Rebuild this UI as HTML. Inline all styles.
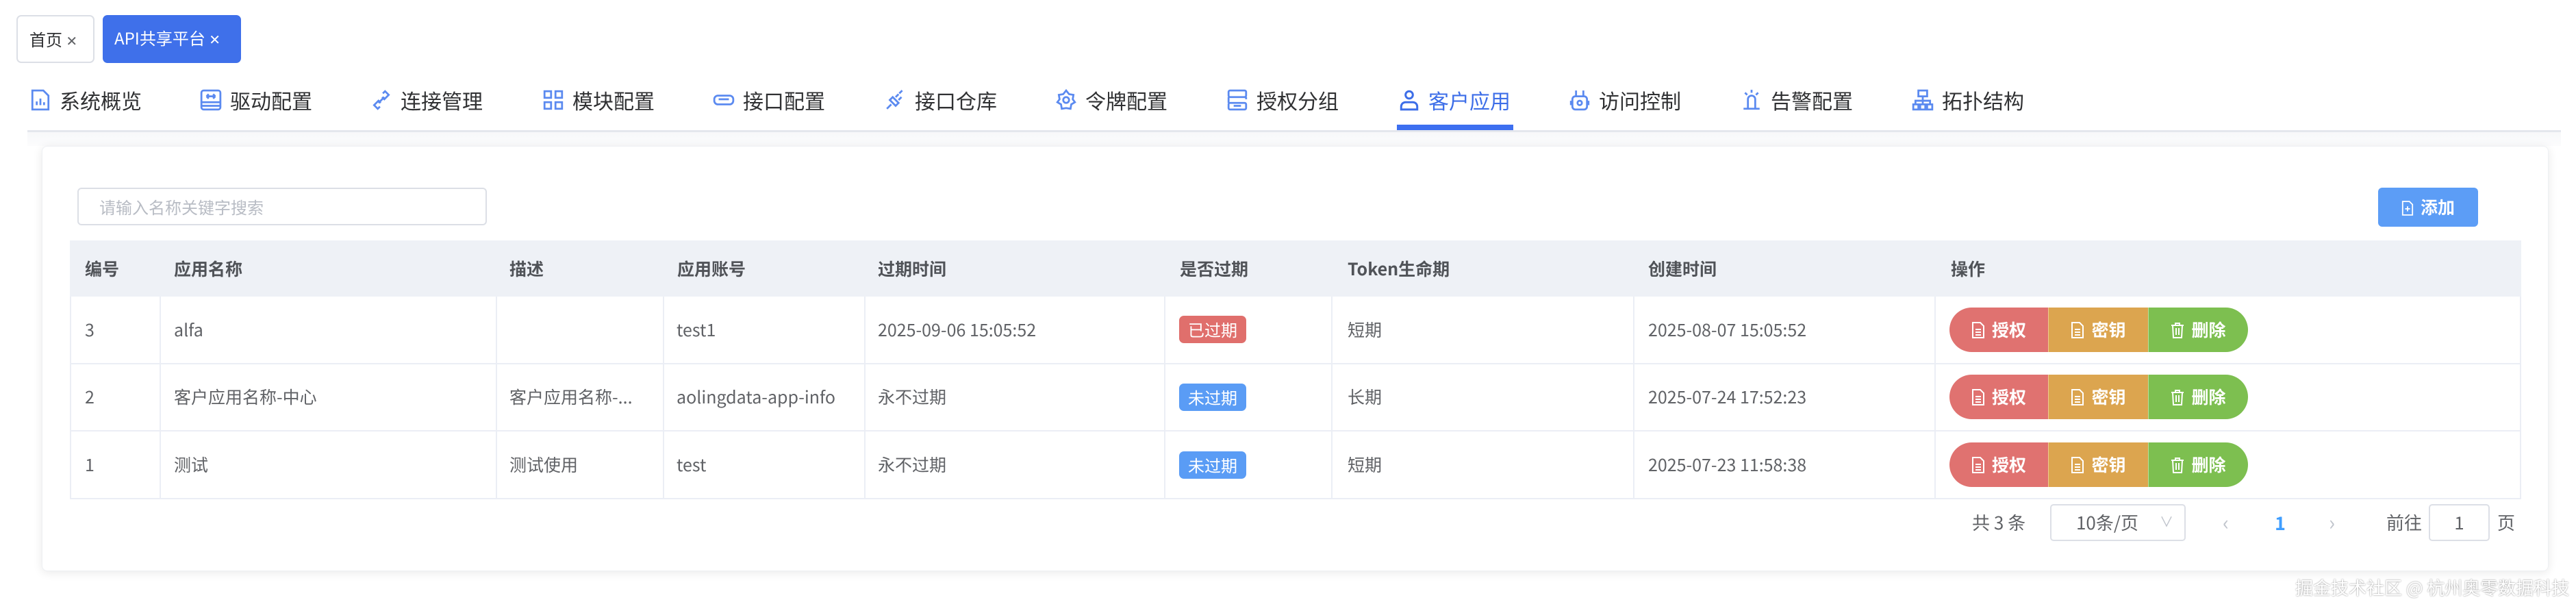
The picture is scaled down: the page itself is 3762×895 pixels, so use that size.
<!DOCTYPE html>
<html><head><meta charset="utf-8"><style>
*{margin:0;padding:0;box-sizing:border-box}
body{width:3762px;height:895px;background:#fff;font-family:"Noto Sans CJK SC","Liberation Sans",sans-serif;color:#606266;position:relative;overflow:hidden}
.a{position:absolute}
.tab{position:absolute;top:22px;height:70px;border-radius:7px;font-size:24px;line-height:66px;padding-left:17px;white-space:nowrap}
.nav{position:absolute;top:126px;height:40px;font-size:30px;line-height:40px;color:#303133;white-space:nowrap}
.nav svg{position:absolute;left:0;top:4px;width:32px;height:32px}
.nav span{position:absolute;left:44px;top:0}
.card{left:61px;top:213px;width:3661px;height:621px;border-radius:8px;background:#fff;box-shadow:0 2px 14px rgba(0,0,0,.09);border:1px solid #eef0f3}
.th{position:absolute;top:351px;height:82px;line-height:82px;font-size:25px;font-weight:bold;color:#505358}
.td{position:absolute;font-size:25px;line-height:40px;color:#606266;white-space:nowrap}
.vl{position:absolute;width:2px;background:#ebeef5}
.hl{position:absolute;left:102px;width:3580px;height:2px;background:#ebeef5}
.tag{position:absolute;left:1722px;width:98px;height:40px;border-radius:7px;color:#fff;font-size:24px;line-height:40px;text-align:center}
.btns{position:absolute;left:2847px;width:436px;height:65px;border-radius:33px;overflow:hidden;display:flex}
.btns div{height:65px;line-height:65px;color:#fff;font-size:25px;font-weight:bold;text-align:center}
.btns svg{width:20px;height:24px;vertical-align:-3px;margin-right:10px}
</style></head><body>

<div class="tab" style="left:24px;width:114px;border:2px solid #dcdfe6;color:#303133">首页 <span style="font-size:20px;color:#606266">✕</span></div>
<div class="tab" style="left:150px;width:202px;background:#3f70ea;color:#fff">API共享平台 <span style="font-size:20px">✕</span></div>

<div class="nav" style="left:43px"><svg viewBox="0 0 30 30" fill="none" stroke="#5b8af0" stroke-width="2.6"><path d="M4 2h15l7 7v19H4z"/><path d="M10 22v-5M15 22v-9M20 22v-4"/></svg><span>系统概览</span></div>
<div class="nav" style="left:292px"><svg viewBox="0 0 30 30" fill="none" stroke="#5b8af0" stroke-width="2.6"><rect x="2" y="2" width="26" height="26" rx="3"/><path d="M2 18h26M2 23h26M11 10h8M9 10l3-3M9 10l3 3M21 10l-3-3M21 10l-3 3"/></svg><span>驱动配置</span></div>
<div class="nav" style="left:541px"><svg viewBox="0 0 30 30" fill="none" stroke="#5b8af0" stroke-width="2.6"><path d="M17 6l3-3 5 5-6 6-3-3M13 24l-3 3-5-5 6-6 3 3M11 19l8-8"/></svg><span>连接管理</span></div>
<div class="nav" style="left:792px"><svg viewBox="0 0 30 30" fill="none" stroke="#5b8af0" stroke-width="2.6"><rect x="3" y="3" width="9" height="9"/><rect x="18" y="3" width="9" height="9"/><rect x="3" y="18" width="9" height="9"/><rect x="18" y="18" width="9" height="9"/></svg><span>模块配置</span></div>
<div class="nav" style="left:1041px"><svg viewBox="0 0 30 30" fill="none" stroke="#5b8af0" stroke-width="2.6"><rect x="2" y="9" width="26" height="12" rx="5"/><path d="M8 14h14"/></svg><span>接口配置</span></div>
<div class="nav" style="left:1292px"><svg viewBox="0 0 30 30" fill="none" stroke="#5b8af0" stroke-width="2.6"><path d="M3 27l6-6M11 11l8 8-4 4-8-8zM15 11l4-4M19 15l4-4M20 6l4-4"/></svg><span>接口仓库</span></div>
<div class="nav" style="left:1541px"><svg viewBox="0 0 30 30" fill="none" stroke="#5b8af0" stroke-width="2.6"><path d="M15 2l4 5 6 1-1 6 3 4-5 3-1 6-6-1-6 1-1-6-5-3 3-4-1-6 6-1z"/><circle cx="15" cy="15" r="4"/></svg><span>令牌配置</span></div>
<div class="nav" style="left:1791px"><svg viewBox="0 0 30 30" fill="none" stroke="#5b8af0" stroke-width="2.6"><rect x="3" y="2" width="24" height="9" rx="2"/><rect x="3" y="19" width="24" height="9" rx="2"/><path d="M3 11v8M27 11v3M10 23h10"/></svg><span>授权分组</span></div>
<div class="nav" style="left:2042px;color:#3d6ee8"><svg viewBox="0 0 30 30" fill="none" stroke="#3d6ee8" stroke-width="2.8"><circle cx="15" cy="8" r="5"/><path d="M4 28v-4a6 6 0 0 1 6-6h10a6 6 0 0 1 6 6v4z"/></svg><span>客户应用</span></div>
<div class="nav" style="left:2291px"><svg viewBox="0 0 30 30" fill="none" stroke="#5b8af0" stroke-width="2.6"><rect x="5" y="10" width="20" height="18" rx="4"/><circle cx="15" cy="19" r="3"/><path d="M10 10V2M20 10V2M3 16v6M27 16v6"/></svg><span>访问控制</span></div>
<div class="nav" style="left:2542px"><svg viewBox="0 0 30 30" fill="none" stroke="#5b8af0" stroke-width="2.6"><path d="M10 26V14a5 5 0 0 1 10 0v12M4 27h22M15 1v4M6 5l3 3M24 5l-3 3"/></svg><span>告警配置</span></div>
<div class="nav" style="left:2792px"><svg viewBox="0 0 30 30" fill="none" stroke="#5b8af0" stroke-width="2.6"><rect x="9" y="2" width="12" height="8"/><path d="M15 10v6M5 21v-5h20v5M15 16v5"/><rect x="2" y="21" width="7" height="7"/><rect x="11.5" y="21" width="7" height="7"/><rect x="21" y="21" width="7" height="7"/></svg><span>拓扑结构</span></div>
<div class="a" style="left:2040px;top:182px;width:170px;height:8px;background:#3d6ff0"></div>
<div class="a" style="left:40px;top:190px;width:3700px;height:3px;background:#e4e7ed"></div>
<div class="a" style="left:40px;top:193px;width:3700px;height:20px;background:linear-gradient(#f7f8fa,#fcfcfd)"></div>

<div class="a card"></div>

<div class="a" style="left:113px;top:274px;width:598px;height:55px;border:2px solid #dcdfe6;border-radius:6px;font-size:24px;line-height:51px;padding-left:30px;color:#b8bcc4">请输入名称关键字搜索</div>
<div class="a" style="left:3473px;top:274px;width:146px;height:57px;border-radius:6px;background:#5c9df6;color:#fff;font-size:25px;line-height:57px;text-align:center;font-weight:bold"><svg viewBox="0 0 20 24" width="18" height="22" fill="none" stroke="#fff" stroke-width="2" style="vertical-align:-3px;margin-right:10px"><path d="M2 1h11l5 5v17H2z"/><path d="M10 9v8M6 13h8"/></svg>添加</div>

<div class="a" style="left:102px;top:351px;width:3580px;height:82px;background:#eef1f6"></div>
<div class="th" style="left:124px">编号</div>
<div class="th" style="left:254px">应用名称</div>
<div class="th" style="left:744px">描述</div>
<div class="th" style="left:989px">应用账号</div>
<div class="th" style="left:1282px">过期时间</div>
<div class="th" style="left:1723px">是否过期</div>
<div class="th" style="left:1968px">Token生命期</div>
<div class="th" style="left:2407px">创建时间</div>
<div class="th" style="left:2849px">操作</div>

<div class="hl" style="top:530px"></div>
<div class="hl" style="top:628px"></div>
<div class="hl" style="top:727px"></div>
<div class="vl" style="left:102px;top:433px;height:296px"></div>
<div class="vl" style="left:233px;top:433px;height:296px"></div>
<div class="vl" style="left:724px;top:433px;height:296px"></div>
<div class="vl" style="left:968px;top:433px;height:296px"></div>
<div class="vl" style="left:1262px;top:433px;height:296px"></div>
<div class="vl" style="left:1700px;top:433px;height:296px"></div>
<div class="vl" style="left:1944px;top:433px;height:296px"></div>
<div class="vl" style="left:2385px;top:433px;height:296px"></div>
<div class="vl" style="left:2825px;top:433px;height:296px"></div>
<div class="vl" style="left:3680px;top:433px;height:296px"></div>

<div class="td" style="left:124px;top:461px">3</div>
<div class="td" style="left:254px;top:461px">alfa</div>
<div class="td" style="left:988px;top:461px">test1</div>
<div class="td" style="left:1282px;top:461px">2025-09-06 15:05:52</div>
<div class="tag" style="top:461px;background:#e06f6c">已过期</div>
<div class="td" style="left:1968px;top:461px">短期</div>
<div class="td" style="left:2407px;top:461px">2025-08-07 15:05:52</div>

<div class="td" style="left:124px;top:559px">2</div>
<div class="td" style="left:254px;top:559px">客户应用名称-中心</div>
<div class="td" style="left:744px;top:559px">客户应用名称-...</div>
<div class="td" style="left:988px;top:559px">aolingdata-app-info</div>
<div class="td" style="left:1282px;top:559px">永不过期</div>
<div class="tag" style="top:560px;background:#5a9cf5">未过期</div>
<div class="td" style="left:1968px;top:559px">长期</div>
<div class="td" style="left:2407px;top:559px">2025-07-24 17:52:23</div>

<div class="td" style="left:124px;top:658px">1</div>
<div class="td" style="left:254px;top:658px">测试</div>
<div class="td" style="left:744px;top:658px">测试使用</div>
<div class="td" style="left:988px;top:658px">test</div>
<div class="td" style="left:1282px;top:658px">永不过期</div>
<div class="tag" style="top:659px;background:#5a9cf5">未过期</div>
<div class="td" style="left:1968px;top:658px">短期</div>
<div class="td" style="left:2407px;top:658px">2025-07-23 11:58:38</div>

<div class="btns" style="top:449px"><div style="width:144px;background:#e07270"><svg viewBox="0 0 20 24" fill="none" stroke="#fff" stroke-width="2"><path d="M2 1h11l5 5v17H2zM6 11h8M6 15h8M6 19h8"/></svg>授权</div><div style="width:146px;background:#dca54f;border-left:1px solid #f0c890"><svg viewBox="0 0 20 24" fill="none" stroke="#fff" stroke-width="2"><path d="M2 1h11l5 5v17H2zM6 11h8M6 15h8M6 19h8"/></svg>密钥</div><div style="width:146px;background:#7dbf50;border-left:1px solid #b6e09a"><svg viewBox="0 0 20 24" fill="none" stroke="#fff" stroke-width="2"><path d="M1 5h18M7 5V2h6v3M3 5l1 18h12l1-18M8 9v10M12 9v10"/></svg>删除</div></div>
<div class="btns" style="top:547px"><div style="width:144px;background:#e07270"><svg viewBox="0 0 20 24" fill="none" stroke="#fff" stroke-width="2"><path d="M2 1h11l5 5v17H2zM6 11h8M6 15h8M6 19h8"/></svg>授权</div><div style="width:146px;background:#dca54f;border-left:1px solid #f0c890"><svg viewBox="0 0 20 24" fill="none" stroke="#fff" stroke-width="2"><path d="M2 1h11l5 5v17H2zM6 11h8M6 15h8M6 19h8"/></svg>密钥</div><div style="width:146px;background:#7dbf50;border-left:1px solid #b6e09a"><svg viewBox="0 0 20 24" fill="none" stroke="#fff" stroke-width="2"><path d="M1 5h18M7 5V2h6v3M3 5l1 18h12l1-18M8 9v10M12 9v10"/></svg>删除</div></div>
<div class="btns" style="top:646px"><div style="width:144px;background:#e07270"><svg viewBox="0 0 20 24" fill="none" stroke="#fff" stroke-width="2"><path d="M2 1h11l5 5v17H2zM6 11h8M6 15h8M6 19h8"/></svg>授权</div><div style="width:146px;background:#dca54f;border-left:1px solid #f0c890"><svg viewBox="0 0 20 24" fill="none" stroke="#fff" stroke-width="2"><path d="M2 1h11l5 5v17H2zM6 11h8M6 15h8M6 19h8"/></svg>密钥</div><div style="width:146px;background:#7dbf50;border-left:1px solid #b6e09a"><svg viewBox="0 0 20 24" fill="none" stroke="#fff" stroke-width="2"><path d="M1 5h18M7 5V2h6v3M3 5l1 18h12l1-18M8 9v10M12 9v10"/></svg>删除</div></div>

<div class="td" style="left:2880px;top:743px;font-size:26px">共 3 条</div>
<div class="a" style="left:2994px;top:736px;width:198px;height:54px;border:2px solid #dcdfe6;border-radius:5px;font-size:26px;line-height:50px;padding-left:36px;color:#606266">10条/页<span style="position:absolute;right:16px;top:-2px;color:#c0c4cc;font-size:20px">∨</span></div>
<div class="td" style="left:3246px;top:741px;font-size:30px;color:#c0c4cc">‹</div>
<div class="td" style="left:3322px;top:743px;font-size:27px;color:#409eff;font-weight:bold">1</div>
<div class="td" style="left:3401px;top:741px;font-size:30px;color:#c0c4cc">›</div>
<div class="td" style="left:3485px;top:743px;font-size:26px">前往</div>
<div class="a" style="left:3547px;top:736px;width:89px;height:54px;border:2px solid #dcdfe6;border-radius:5px;font-size:26px;line-height:50px;text-align:center;color:#606266">1</div>
<div class="td" style="left:3647px;top:743px;font-size:26px">页</div>

<div class="td" style="left:3352px;top:838px;font-size:26px;color:#fff;text-shadow:0 0 2px #888">掘金技术社区 @ 杭州奥零数据科技</div>
</body></html>
